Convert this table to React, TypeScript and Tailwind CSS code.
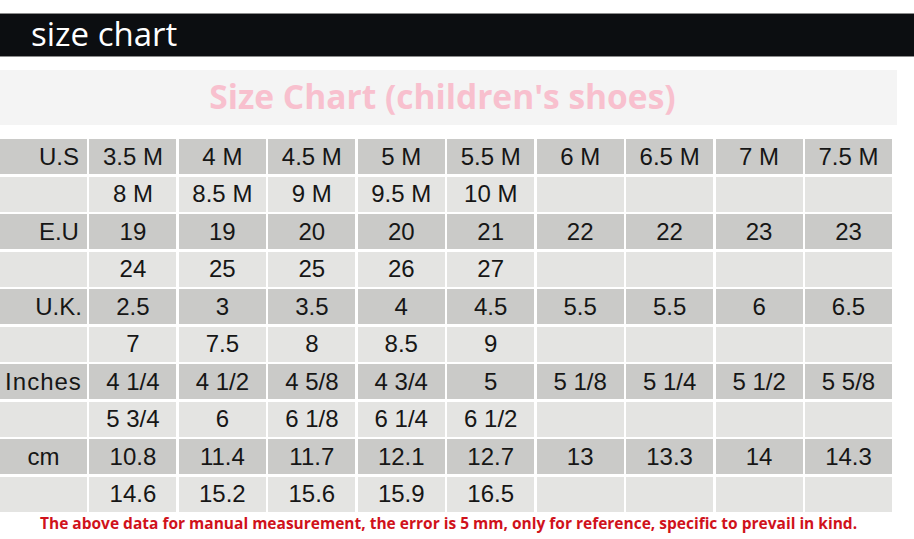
import React from "react"

type Row = {
  label: string
  align: string
  cells: string[]
  dark: boolean
}

const rows: Row[] = [
  { label: "U.S", align: "justify-end pr-[8px]", cells: ["3.5 M", "4 M", "4.5 M", "5 M", "5.5 M", "6 M", "6.5 M", "7 M", "7.5 M"], dark: true },
  { label: "", align: "", cells: ["8 M", "8.5 M", "9 M", "9.5 M", "10 M", "", "", "", ""], dark: false },
  { label: "E.U", align: "justify-end pr-[8px]", cells: ["19", "19", "20", "20", "21", "22", "22", "23", "23"], dark: true },
  { label: "", align: "", cells: ["24", "25", "25", "26", "27", "", "", "", ""], dark: false },
  { label: "U.K.", align: "justify-end pr-[5px]", cells: ["2.5", "3", "3.5", "4", "4.5", "5.5", "5.5", "6", "6.5"], dark: true },
  { label: "", align: "", cells: ["7", "7.5", "8", "8.5", "9", "", "", "", ""], dark: false },
  { label: "Inches", align: "justify-center tracking-[1px]", cells: ["4 1/4", "4 1/2", "4 5/8", "4 3/4", "5", "5 1/8", "5 1/4", "5 1/2", "5 5/8"], dark: true },
  { label: "", align: "", cells: ["5 3/4", "6", "6 1/8", "6 1/4", "6 1/2", "", "", "", ""], dark: false },
  { label: "cm", align: "justify-center", cells: ["10.8", "11.4", "11.7", "12.1", "12.7", "13", "13.3", "14", "14.3"], dark: true },
  { label: "", align: "", cells: ["14.6", "15.2", "15.6", "15.9", "16.5", "", "", "", ""], dark: false },
]

export default function App() {
  return (
    <div className="w-[914px] h-[539px] bg-white overflow-hidden relative">
      {/* black header bar */}
      <div className="mt-[13px] h-[44px] bg-[#0c0e11] border-y border-[#8c8c8c] flex items-center pl-[31px]">
        <span className="text-white text-[33px] leading-none pb-[3px] font-['Open_Sans',sans-serif]">
          size chart
        </span>
      </div>

      {/* pink title band */}
      <div className="mt-[13px] w-[897px] h-[55px] bg-[#f4f4f4] flex items-center justify-center pr-[12px]">
        <span className="text-[#f8c0ce] text-[33.5px] font-bold leading-none pb-[2px] font-['Open_Sans',sans-serif]">
          Size Chart (children's shoes)
        </span>
      </div>

      {/* table */}
      <div className="mt-[14px] w-[892px] grid grid-cols-10 gap-x-[2.5px] gap-y-[2.5px] font-['Liberation_Sans',Arial,sans-serif] text-[24px] text-[#161616]">
        {rows.map((row, i) => (
          <React.Fragment key={i}>
            <div
              className={`h-[35px] flex items-center leading-none ${row.align} ${row.dark ? "bg-[#cacac8]" : "bg-[#e4e4e2]"}`}
            >
              {row.label}
            </div>
            {row.cells.map((c, j) => (
              <div
                key={j}
                className={`h-[35px] flex items-center justify-center leading-none ${row.dark ? "bg-[#cacac8]" : "bg-[#e4e4e2]"}`}
              >
                {c}
              </div>
            ))}
          </React.Fragment>
        ))}
      </div>

      {/* footer note */}
      <div className="pl-[40px] pt-[1px] text-[#d0121b] text-[15.5px] font-bold leading-[20px] font-['Open_Sans',sans-serif] whitespace-nowrap">
        The above data for manual measurement, the error is 5 mm, only for reference, specific to prevail in kind.
      </div>
    </div>
  )
}
